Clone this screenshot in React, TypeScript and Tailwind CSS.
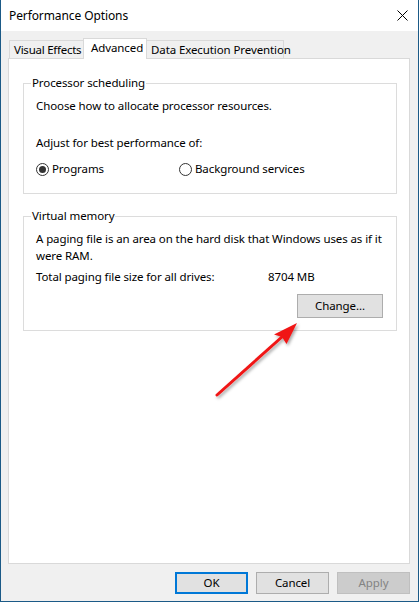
import React from "react";

const font = { fontFamily: '"Noto Sans", "Open Sans", "Liberation Sans", sans-serif' };

function Radio({ checked }: { checked: boolean }) {
  return (
    <span className="w-[13px] h-[13px] rounded-full border border-[#333333] bg-white flex items-center justify-center shrink-0">
      {checked && <span className="w-[7px] h-[7px] rounded-full bg-[#333333]" />}
    </span>
  );
}

function Group({ title, className, children }: { title: string; className: string; children: React.ReactNode }) {
  return (
    <div className={"relative border border-[#dcdcdc] ml-[14px] w-[374px] " + className}>
      <span className="absolute left-[7px] top-[-9px] px-[1px] bg-white leading-[16px] whitespace-nowrap">{title}</span>
      {children}
    </div>
  );
}

export default function App() {
  return (
    <div
      className="relative w-[419px] h-[602px] bg-[#f0f0f0] border-l border-r border-b border-[#1b5a87] text-[11.5px] tracking-[-0.1px] text-black overflow-hidden"
      style={font}
    >
      {/* Title bar */}
      <div className="h-[31px] bg-white flex items-center justify-between pl-[8px] pr-[10px]">
        <span className="leading-[16px] text-[12px]">Performance Options</span>
        <svg width="11" height="11" viewBox="0 0 11 11">
          <path d="M0.5 0.5 L10.5 10.5 M10.5 0.5 L0.5 10.5" stroke="#000" strokeWidth="1" />
        </svg>
      </div>

      <div className="pl-[7px] pr-[8px] pt-[7px]">
        {/* Tabs */}
        <div className="flex items-end h-[20px] pl-[1px] whitespace-nowrap">
          <div className="w-[75px] h-[18px] border border-b-0 border-[#d9d9d9] bg-[#f0f0f0] flex items-center pl-[4px] tracking-[-0.25px] leading-[16px]">
            Visual Effects
          </div>
          <div className="relative z-10 -ml-px w-[64px] h-[21px] -mb-px border border-b-0 border-[#d9d9d9] bg-white flex items-start pt-[1px] pl-[7px] leading-[16px]">
            Advanced
          </div>
          <div className="-ml-px w-[138px] h-[18px] border border-b-0 border-[#d9d9d9] bg-[#f0f0f0] flex items-center pl-[4px] leading-[16px]">
            Data Execution Prevention
          </div>
        </div>

        {/* Panel */}
        <div className="h-[506px] bg-white border border-[#d9d9d9] pt-[24px]">
          <Group title="Processor scheduling" className="h-[111px]">
            <div className="pl-[12px] pt-[14px] leading-[16px]">
              <div>Choose how to allocate processor resources.</div>
              <div className="mt-[21px]">Adjust for best performance of:</div>
              <div className="mt-[10px] flex items-center h-[16px]">
                <div className="flex items-center w-[143px] gap-[3px]">
                  <Radio checked />
                  <span>Programs</span>
                </div>
                <div className="flex items-center gap-[3px]">
                  <Radio checked={false} />
                  <span>Background services</span>
                </div>
              </div>
            </div>
          </Group>

          <Group title="Virtual memory" className="h-[115px] mt-[22px]">
            <div className="pl-[12px] pt-[13px] leading-[17px]">
              <div className="whitespace-nowrap">
                A paging file is an area on the hard disk that Windows uses as if it
                <br />
                were RAM.
              </div>
              <div className="mt-[4px] flex">
                <span className="w-[232px]">Total paging file size for all drives:</span>
                <span>8704 MB</span>
              </div>
              <div className="flex justify-end pr-[13px] mt-[9px]">
                <button className="w-[86px] h-[24px] bg-[#e1e1e1] border border-[#adadad] leading-[16px]">
                  Change...
                </button>
              </div>
            </div>
          </Group>
        </div>

        {/* Bottom buttons */}
        <div className="flex justify-end gap-[8px] mt-[8px]">
          <button className="w-[73px] h-[22px] bg-[#e1e1e1] border-2 border-[#0078d7] leading-[16px]">OK</button>
          <button className="w-[73px] h-[22px] bg-[#e1e1e1] border border-[#adadad] leading-[16px]">Cancel</button>
          <button className="w-[73px] h-[22px] bg-[#cccccc] border border-[#bfbfbf] text-[#838383] leading-[16px]">Apply</button>
        </div>
      </div>

      {/* Red arrow annotation */}
      <svg className="absolute left-0 top-0 pointer-events-none" width="419" height="602" viewBox="0 0 419 602">
        <defs>
          <filter id="sh" x="-20%" y="-20%" width="140%" height="140%">
            <feDropShadow dx="1.5" dy="2" stdDeviation="1.5" floodColor="#000" floodOpacity="0.35" />
          </filter>
        </defs>
        <g filter="url(#sh)">
          <line x1="216" y1="395" x2="282" y2="336" stroke="#f01414" strokeWidth="3" strokeLinecap="round" />
          <path d="M296 323 L285.5 344 L281 337 L273 334.5 Z" fill="#f01414" />
        </g>
      </svg>
    </div>
  );
}
